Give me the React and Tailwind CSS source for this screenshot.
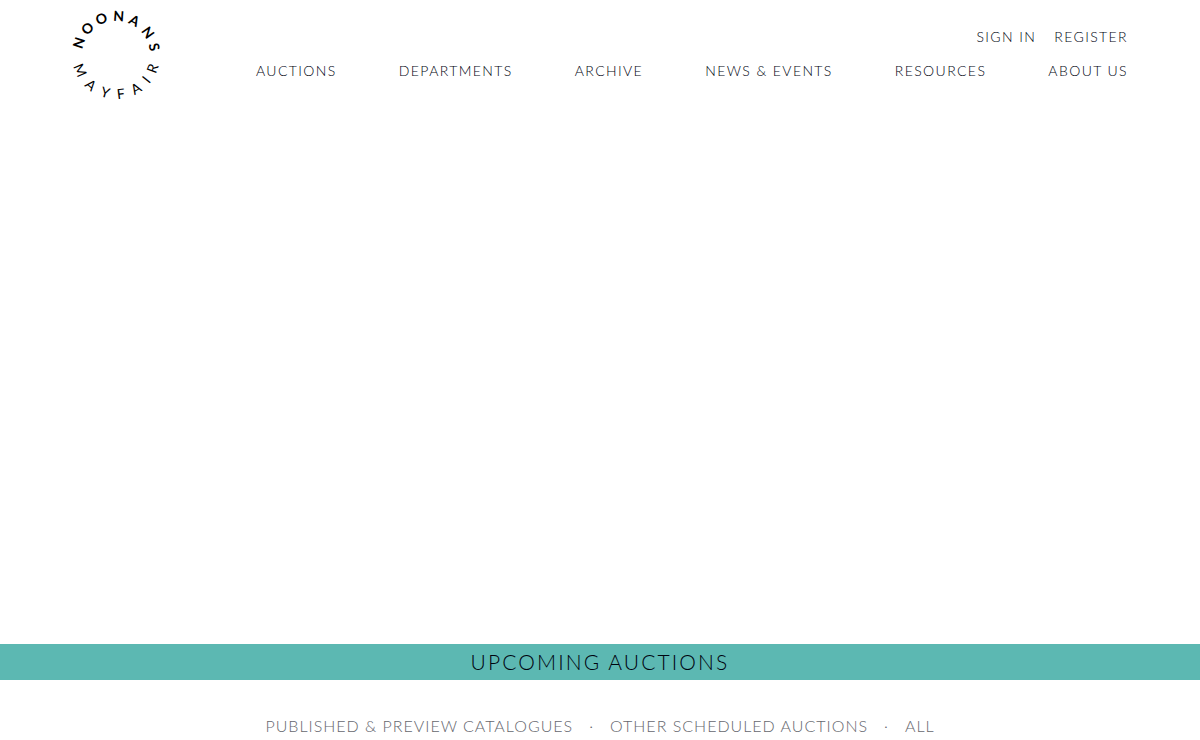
import React from "react";

const NAV = ["Auctions", "Departments", "Archive", "News & Events", "Resources", "About Us"];
const FILTERS = ["Published & Preview Catalogues", "Other Scheduled Auctions", "All"];

// Each letter carries its clockwise angle on the ring, measured from the vertical.
const TOP_ARC = [["N", -72], ["O", -47], ["O", -22], ["N", 4], ["A", 28], ["N", 55], ["S", 78]];
const BOTTOM_ARC = [["M", 67], ["A", 40], ["Y", 16], ["F", -7], ["A", -31], ["I", -51], ["R", -70]];

function Logo() {
  return (
    <svg viewBox="-52 -52 104 104" className="block size-[104px] overflow-visible" role="img" aria-label="Noonans Mayfair">
      <g textAnchor="middle" fill="#000" fontFamily="Lato, sans-serif" fontSize="14">
        {TOP_ARC.map(([letter, angle], i) => (
          <text key={i} fontWeight="700" y="-34" transform={`rotate(${angle})`}>{letter}</text>
        ))}
        {BOTTOM_ARC.map(([letter, angle], i) => (
          <text key={i} fontWeight="400" y="44" transform={`rotate(${angle})`}>{letter}</text>
        ))}
      </g>
    </svg>
  );
}

export default function App() {
  return (
    <div className="bg-white font-['Lato',sans-serif] font-light text-[#000410]">
      <header className="flex gap-22 pt-[3px] pr-18 pl-16">
        <a href="#home" className="shrink-0"><Logo /></a>
        <div className="flex-1 pt-6 text-sm leading-5 tracking-widest uppercase">
          <div className="flex justify-end gap-[18px]">
            <a href="#sign-in">Sign in</a>
            <a href="#register">Register</a>
          </div>
          <nav className="mt-[14px] flex justify-between whitespace-nowrap">
            {NAV.map((item) => (
              <a key={item} href="#nav">{item}</a>
            ))}
          </nav>
        </div>
      </header>
      <main>
        <section aria-label="Featured" className="h-[537px]" />
        <h1 className="bg-[#5cb8b2] text-center text-[21px] leading-9 font-light tracking-widest uppercase">
          Upcoming Auctions
        </h1>
        <div className="flex items-center justify-center pt-[34px] pb-[2px] text-base leading-6 tracking-[1px] whitespace-nowrap text-[#66676e]">
          {FILTERS.map((label, i) => (
            <React.Fragment key={label}>
              {i > 0 && <span className="px-4">·</span>}
              <button type="button" className="uppercase">{label}</button>
            </React.Fragment>
          ))}
        </div>
      </main>
    </div>
  );
}
